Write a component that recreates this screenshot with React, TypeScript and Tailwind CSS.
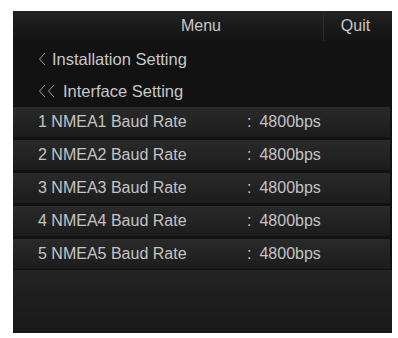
import React from 'react';

const rows = [1, 2, 3, 4, 5];

function Chevron() {
  return (
    <svg width="8" height="14" viewBox="0 0 8 14" className="shrink-0">
      <path d="M7 1 L1.5 7 L7 13" fill="none" stroke="#9c9c9c" strokeWidth="1" />
    </svg>
  );
}

export default function App() {
  return (
    <div className="w-[398px] h-[338px] bg-white pt-[11px] pl-[13px]" style={{ fontFamily: '"Liberation Sans", Arial, sans-serif' }}>
      <div className="w-[379px] h-[322px] bg-[#121212] flex flex-col">
        {/* header */}
        <div className="h-[30px] flex bg-gradient-to-b from-[#222222] to-[#131313]">
          <div className="flex-1 flex items-center justify-center text-[16px] text-[#c8c8c8] pl-[66px]">Menu</div>
          <div className="w-[69px] border-l border-[#2e2e2e] flex items-center justify-center text-[16px] text-[#c8c8c8] pr-[5px]">Quit</div>
        </div>
        <div className="h-[33px] flex items-center pl-[25px] text-[16.5px] text-[#c8c8c8] pt-[3px]">
          <span className="mr-[6px] flex"><Chevron /></span>
          <span>Installation Setting</span>
        </div>
        <div className="h-[33px] flex items-center pl-[25px] text-[16.5px] text-[#c8c8c8] pt-[2px]">
          <span className="mr-[8px] flex -mt-[2px]">
            <Chevron />
            <span className="ml-[1px] flex"><Chevron /></span>
          </span>
          <span>Interface Setting</span>
        </div>
        <div className="flex flex-col gap-[3px] pr-[2px]">
          {rows.map((n) => (
            <div
              key={n}
              className="h-[30px] flex items-center bg-gradient-to-b from-[#2a2a2a] to-[#1c1c1c] text-[16px] text-[#c4c4c4]"
            >
              <span className="pl-[25px] w-[234px]">{n} NMEA{n} Baud Rate</span>
              <span className="mr-[8px]">:</span>
              <span>4800bps</span>
            </div>
          ))}
        </div>
        <div className="flex-1 mt-[1px] bg-gradient-to-b from-[#232323] to-[#191919]" />
      </div>
    </div>
  );
}
